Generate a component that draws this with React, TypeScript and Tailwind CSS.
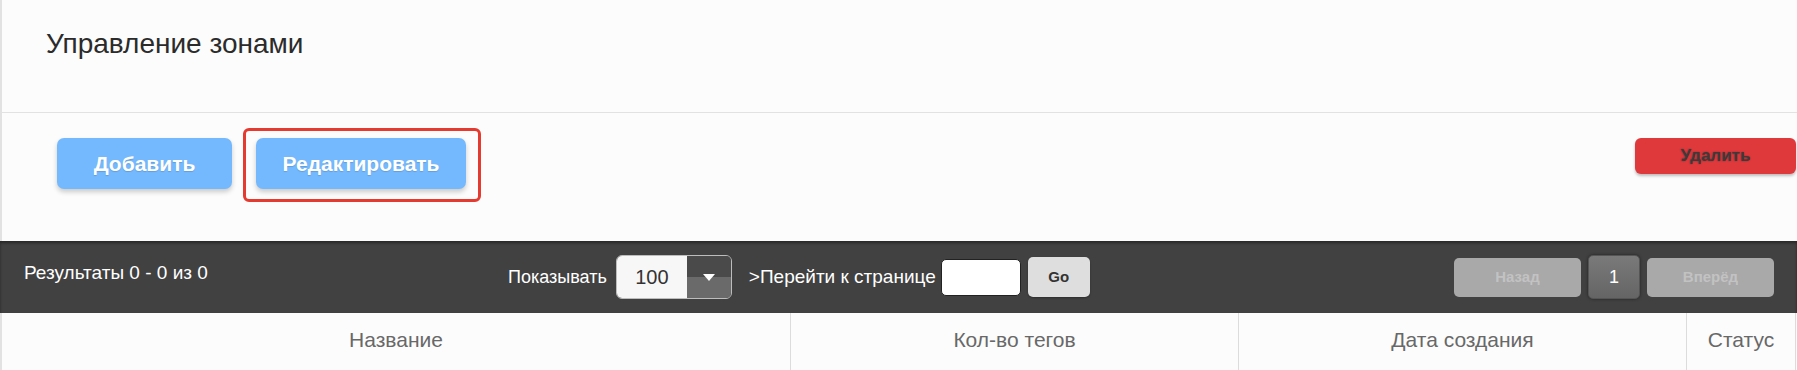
const font = "font-['Liberation_Sans',Arial,sans-serif]"

export default function App() {
  return (
    <div className={`w-[1797px] h-[370px] overflow-hidden bg-[#fcfcfc] ${font}`}>
      {/* Title */}
      <div className="h-[113px] border-l-2 border-b border-[#e2e2e2] pl-[44px] pt-[28px]">
        <h1 className="text-[28px] leading-[32px] text-[#2b2b2b]">Управление зонами</h1>
      </div>

      {/* Actions */}
      <div className="h-[128px] border-l-2 border-[#e2e2e2] flex items-start pt-[25px] pl-[55px] pr-[1px]">
        <button className="w-[175px] h-[51px] rounded-[7px] bg-[#74b9fe] text-white text-[21px] font-bold shadow-[0_3px_5px_rgba(0,0,0,0.2)] [text-shadow:0_1px_1px_rgba(0,0,0,0.15)]">
          Добавить
        </button>
        <div className="relative ml-[24px]">
          <button className="w-[210px] h-[51px] rounded-[7px] bg-[#74b9fe] text-white text-[21px] font-bold shadow-[0_3px_5px_rgba(0,0,0,0.2)] [text-shadow:0_1px_1px_rgba(0,0,0,0.15)]">
            Редактировать
          </button>
          <div className="absolute left-[-13px] top-[-10px] w-[238px] h-[74px] border-[3px] border-[#e53a2f] rounded-[6px] pointer-events-none" />
        </div>
        <button className="ml-auto w-[161px] h-[36px] rounded-[6px] bg-[#e0393c] text-[#3b3b3b] text-[17px] font-bold shadow-[0_2px_3px_rgba(0,0,0,0.25)] [text-shadow:0_0_2px_rgba(0,0,0,0.35)]">
          Удалить
        </button>
      </div>

      {/* Pager bar */}
      <div className="h-[72px] bg-[#414141] shadow-[inset_0_2px_3px_rgba(0,0,0,0.4)] flex items-center text-white text-[18px]">
        <div className="w-[508px] pl-[24px] pb-[8px] text-[19px]">Результаты 0 - 0 из 0</div>
        <span>Показывать</span>
        <div className="ml-[9px] w-[116px] h-[44px] rounded-[6px] border border-[#bdbdbd] overflow-hidden flex">
          <div className="w-[70px] bg-[#f7f7f7] text-[#333] text-[20px] flex items-center justify-center">100</div>
          <div className="flex-1 flex flex-col relative">
            <div className="h-1/2 bg-[#4a4a4a]" />
            <div className="h-1/2 bg-[#6a6a6a]" />
            <div className="absolute inset-0 flex items-center justify-center">
              <svg width="12" height="7" viewBox="0 0 12 7">
                <path d="M0 0 H12 L6 7 Z" fill="#ffffff" />
              </svg>
            </div>
          </div>
        </div>
        <span className="ml-[17px] text-[19px]">&gt;Перейти к странице</span>
        <input className="ml-[5px] w-[80px] h-[37px] rounded-[5px] border border-[#222] bg-white outline-none" />
        <button className="ml-[7px] w-[62px] h-[40px] rounded-[5px] bg-[#dedede] text-[#333] text-[15px] font-bold shadow-[0_1px_2px_rgba(0,0,0,0.3)]">
          Go
        </button>
        <div className="ml-auto pr-[23px] flex items-center gap-[7px]">
          <button className="w-[127px] h-[39px] rounded-[5px] bg-[#a9a9a9] text-[#c2c2c2] text-[15px] font-bold">Назад</button>
          <button className="w-[52px] h-[44px] rounded-[5px] bg-[linear-gradient(#7a7a7a,#656565)] border border-[#555] text-white text-[18px] shadow-[0_0_3px_rgba(0,0,0,0.5)]">
            1
          </button>
          <button className="w-[127px] h-[39px] rounded-[5px] bg-[#a9a9a9] text-[#c2c2c2] text-[15px] font-bold">Вперёд</button>
        </div>
      </div>

      {/* Table header */}
      <div className="flex border-l-2 border-[#e2e2e2] text-[21px] leading-[24px] text-[#686868]">
        <div className="w-[789px] pt-[15px] pb-[20px] text-center border-r border-[#dcdcdc]">Название</div>
        <div className="w-[448px] pt-[15px] pb-[20px] text-center border-r border-[#dcdcdc]">Кол-во тегов</div>
        <div className="w-[448px] pt-[15px] pb-[20px] text-center border-r border-[#dcdcdc]">Дата создания</div>
        <div className="w-[109px] pt-[15px] pb-[20px] text-center border-r border-[#dcdcdc]">Статус</div>
      </div>
    </div>
  )
}
